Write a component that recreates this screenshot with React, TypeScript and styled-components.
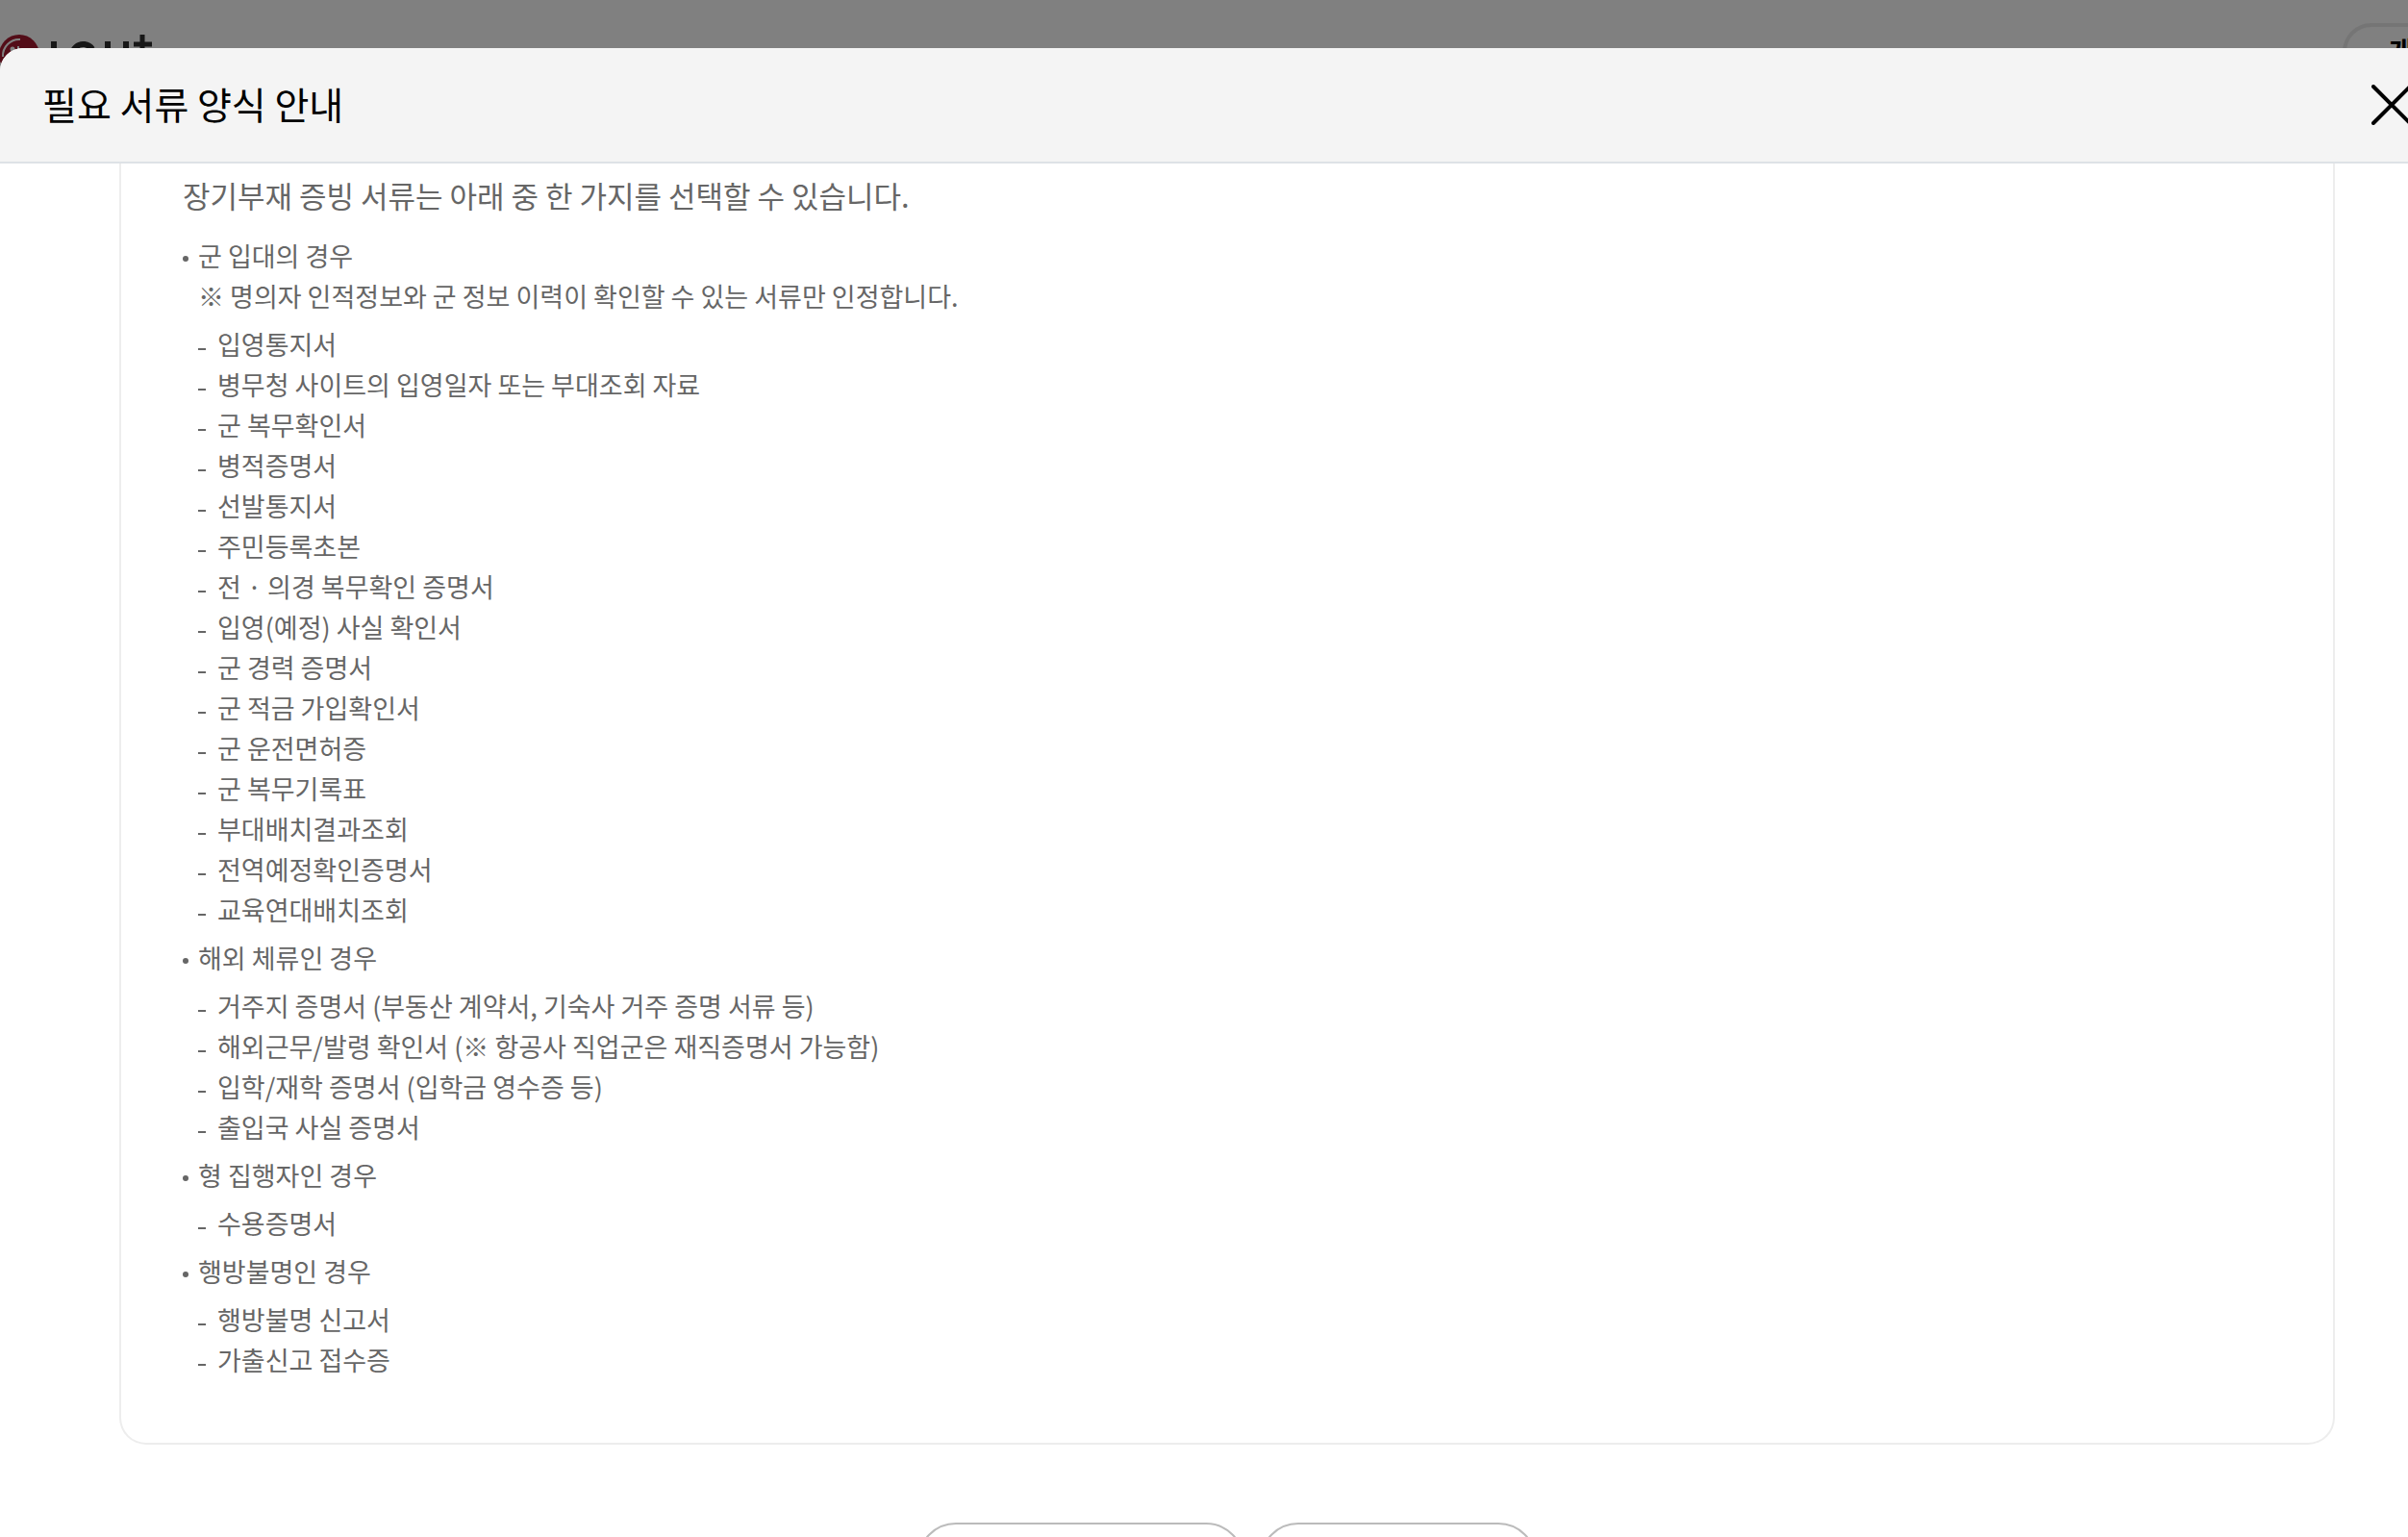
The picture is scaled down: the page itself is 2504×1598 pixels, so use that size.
import React from "react";
import styled, { createGlobalStyle } from "styled-components";

const GlobalStyle = createGlobalStyle`
  *, *::before, *::after { box-sizing: border-box; }
  html, body { margin: 0; height: 100%; overflow: hidden; }
  #root { height: 100%; }
  body { font-family: "Noto Sans CJK KR", sans-serif; color: #666; background: #808080; }
  ul, h1, p { margin: 0; padding: 0; }
  ul { list-style: none; }
`;

const Screen = styled.div`
  height: 100%;
  position: relative;
  overflow: hidden;
  padding-top: 50px;
  display: flex;
`;

const SiteBar = styled.header`
  position: absolute;
  top: 0;
  left: 0;
  width: calc(100% + 48px);
  height: 84px;
  padding-top: 24px;
  display: flex;
  justify-content: space-between;
`;

const Brand = styled.a`
  display: block;
  margin-top: 12px;
  height: 42px;
`;

const MemberButton = styled.button`
  height: 60px;
  width: 116px;
  flex: none;
  border: 4px solid #757575;
  border-radius: 30px;
  background: transparent;
  color: #000;
  font: 700 28px/40px "Noto Sans CJK KR", sans-serif;
  text-align: left;
  white-space: nowrap;
  padding: 0 0 4px 44px;
`;

const Sheet = styled.section`
  position: relative;
  flex: 0 0 calc(100% + 48px);
  display: flex;
  flex-direction: column;
  min-height: 0;
  overflow: hidden;
  border-radius: 24px 24px 0 0;
  background: #fff;
`;

const SheetHeader = styled.header`
  flex: none;
  display: flex;
  align-items: center;
  justify-content: space-between;
  height: 120px;
  padding: 0 44px;
  border-bottom: 2px solid #dee2e6;
  background: #f4f4f4;
`;

const Title = styled.h1`
  padding-bottom: 4px;
  font-size: 39px;
  line-height: 60px;
  font-weight: 400;
  color: #000;
`;

const CloseButton = styled.button`
  display: block;
  width: 42px;
  height: 42px;
  padding: 0;
  border: 0;
  background: none;
  svg { display: block; }
`;

const SheetBody = styled.div`
  flex: 1;
  min-height: 0;
  overflow: hidden;
  padding: 0 124px;
`;

const Card = styled.div`
  padding: 9px 64px 65px;
  border: 2px solid #ededed;
  border-top: 0;
  border-radius: 0 0 28px 28px;
`;

const Lead = styled.p`
  font-size: 31px;
  line-height: 48px;
`;

const CaseList = styled.ul`
  display: grid;
  gap: 8px;
  padding-top: 18px;
  font-size: 27px;
  line-height: 42px;
`;

const Case = styled.li`
  position: relative;
  padding-left: 16px;
  &::before {
    content: "";
    position: absolute;
    left: 0;
    top: 21px;
    width: 6px;
    height: 6px;
    border-radius: 50%;
    background: #666;
  }
`;

const DocList = styled.ul`
  padding-top: 8px;
`;

const Doc = styled.li`
  position: relative;
  padding-left: 20px;
  &::before {
    content: "";
    position: absolute;
    left: 0;
    top: 25px;
    width: 8px;
    height: 2px;
    background: #666;
  }
`;

const Actions = styled.div`
  display: flex;
  justify-content: center;
  gap: 16px;
  padding-top: 81px;
`;

const PillButton = styled.button<{ $width: number }>`
  width: ${(p) => p.$width}px;
  height: 80px;
  border: 2px solid #bbb;
  border-radius: 40px;
  background: #fff;
`;

const cases = [
  {
    title: "군 입대의 경우",
    note: "※ 명의자 인적정보와 군 정보 이력이 확인할 수 있는 서류만 인정합니다.",
    docs: [
      "입영통지서",
      "병무청 사이트의 입영일자 또는 부대조회 자료",
      "군 복무확인서",
      "병적증명서",
      "선발통지서",
      "주민등록초본",
      "전 · 의경 복무확인 증명서",
      "입영(예정) 사실 확인서",
      "군 경력 증명서",
      "군 적금 가입확인서",
      "군 운전면허증",
      "군 복무기록표",
      "부대배치결과조회",
      "전역예정확인증명서",
      "교육연대배치조회",
    ],
  },
  {
    title: "해외 체류인 경우",
    docs: [
      "거주지 증명서 (부동산 계약서, 기숙사 거주 증명 서류 등)",
      "해외근무/발령 확인서 (※ 항공사 직업군은 재직증명서 가능함)",
      "입학/재학 증명서 (입학금 영수증 등)",
      "출입국 사실 증명서",
    ],
  },
  { title: "형 집행자인 경우", docs: ["수용증명서"] },
  { title: "행방불명인 경우", docs: ["행방불명 신고서", "가출신고 접수증"] },
];

function Logo() {
  return (
    <svg width="160" height="42" viewBox="0 0 160 42" aria-hidden="true">
      <circle cx="20" cy="21" r="21" fill="#530d18" />
      <path d="M21 5A17 17 0 0 0 3 23" fill="none" stroke="#808080" strokeWidth="2" />
      <circle cx="13" cy="15" r="2.500" fill="#808080" />
      <path d="M19 12v14" stroke="#808080" strokeWidth="2" />
      <g fill="none" stroke="#171717" strokeWidth="6">
        <path d="M56 7v29h13" />
        <path d="M96 15a11.500 11.500 0 1 0 0 13v-5h-9" />
        <path d="M112 7v18q0 9 9.500 9t9.500-9V7" />
        <path d="M139 10h19M148 0v22" strokeWidth="5" />
      </g>
    </svg>
  );
}

export default function App() {
  return (
    <Screen>
      <GlobalStyle />
      <SiteBar>
        <Brand href="#" aria-label="LG U+">
          <Logo />
        </Brand>
        <MemberButton type="button">개인</MemberButton>
      </SiteBar>
      <Sheet role="dialog" aria-modal="true" aria-labelledby="sheet-title">
        <SheetHeader>
          <Title id="sheet-title">필요 서류 양식 안내</Title>
          <CloseButton type="button" aria-label="닫기">
            <svg width="42" height="42" viewBox="0 0 42 42" aria-hidden="true">
              <path d="M2 2l38 38M40 2L2 40" stroke="#000" strokeWidth="4" strokeLinecap="round" />
            </svg>
          </CloseButton>
        </SheetHeader>
        <SheetBody>
          <Card>
            <Lead>장기부재 증빙 서류는 아래 중 한 가지를 선택할 수 있습니다.</Lead>
            <CaseList>
              {cases.map((c) => (
                <Case key={c.title}>
                  <p>{c.title}</p>
                  {c.note && <p>{c.note}</p>}
                  <DocList>
                    {c.docs.map((d) => (
                      <Doc key={d}>{d}</Doc>
                    ))}
                  </DocList>
                </Case>
              ))}
            </CaseList>
          </Card>
          <Actions>
            <PillButton type="button" $width={340} aria-label="서식 다운로드" />
            <PillButton type="button" $width={288} aria-label="확인" />
          </Actions>
        </SheetBody>
      </Sheet>
    </Screen>
  );
}
